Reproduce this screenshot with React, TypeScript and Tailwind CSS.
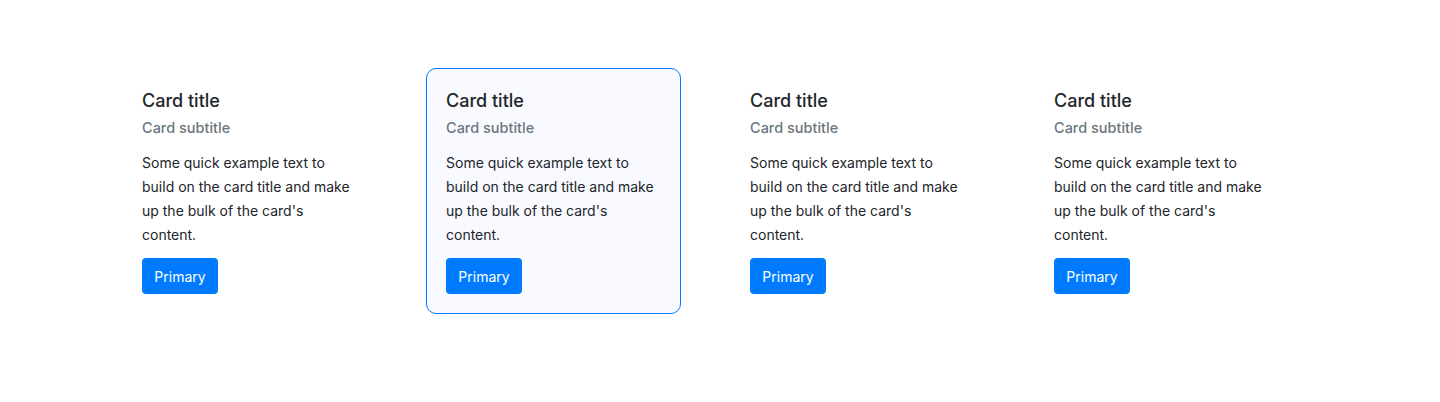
const cards = [false, true, false, false];

function Card({ active }: { active: boolean }) {
  return (
    <div
      className={`w-[255px] rounded-[10px] border px-[19px] pt-5 pb-[19px] ${
        active ? 'border-[#007bff] bg-[#f8faff]' : 'border-transparent bg-white'
      }`}
    >
      <h5 className="text-[18px] font-medium leading-6 text-[#212529]">Card title</h5>
      <h6 className="mt-[3px] text-[14.5px] font-medium leading-6 text-[#6c757d]">
        Card subtitle
      </h6>
      <p className="mt-[11px] text-[14px] leading-6 text-[#212529]">
        Some quick example text to build on the card title and make up the bulk of the
        card's content.
      </p>
      <button className="mt-[11px] h-9 w-[76px] rounded bg-[#007bff] text-[14px] text-white">
        Primary
      </button>
    </div>
  );
}

export default function App() {
  return (
    <div className="min-h-[402px] bg-white pt-[68px] font-['Inter',sans-serif]">
      <div className="flex gap-[49px] pl-[122px]">
        {cards.map((active, i) => (
          <Card key={i} active={active} />
        ))}
      </div>
    </div>
  );
}
